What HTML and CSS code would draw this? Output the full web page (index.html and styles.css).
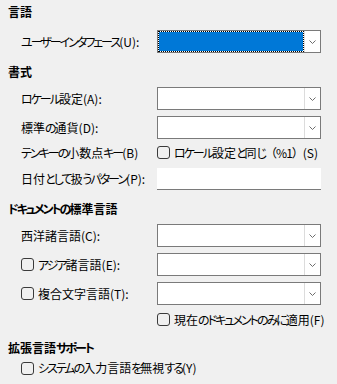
FILE: index.html
```html
<!DOCTYPE html>
<html lang="ja">
<head>
<meta charset="utf-8">
<link rel="stylesheet" href="styles.css">
</head>
<body>
<div class="page">
  <div class="heading mt4">言語</div>
  <div class="row mt10">
    <span class="label"><span class="k">ユーザーインタフェース</span>(U):</span>
    <div class="combo"><div class="field focused"></div><div class="btn"><svg width="7" height="4" viewBox="0 0 7 4"><polyline points="0.5,0.5 3.5,3.5 6.5,0.5" /></svg></div></div>
  </div>

  <div class="heading mt11">書式</div>
  <div class="row mt7">
    <span class="label"><span class="k">ロケール</span>設定(A):</span>
    <div class="combo"><div class="field"></div><div class="btn"><svg width="7" height="4" viewBox="0 0 7 4"><polyline points="0.5,0.5 3.5,3.5 6.5,0.5" /></svg></div></div>
  </div>
  <div class="row mt6">
    <span class="label">標準<span class="k">の</span>通貨(D):</span>
    <div class="combo"><div class="field"></div><div class="btn"><svg width="7" height="4" viewBox="0 0 7 4"><polyline points="0.5,0.5 3.5,3.5 6.5,0.5" /></svg></div></div>
  </div>
  <div class="row mt2">
    <span class="label"><span class="k">テンキーの</span>小数点<span class="k">キー</span>(B)</span>
    <label class="check"><span class="box"></span><span><span class="k">ロケール</span>設定<span class="k">と</span>同<span class="k">じ</span><span class="fw">（%1）</span>(S)</span></label>
  </div>
  <div class="row mt3">
    <span class="label">日付<span class="k">として</span>扱<span class="k">うパターン</span>(P):</span>
    <div class="edit"></div>
  </div>

  <div class="heading mt11"><span class="k">ドキュメントの</span>標準言語</div>
  <div class="row mt7">
    <span class="label">西洋諸言語(C):</span>
    <div class="combo"><div class="field"></div><div class="btn"><svg width="7" height="4" viewBox="0 0 7 4"><polyline points="0.5,0.5 3.5,3.5 6.5,0.5" /></svg></div></div>
  </div>
  <div class="row mt6">
    <label class="label check"><span class="box"></span><span><span class="k">アジア</span>諸言語(E):</span></label>
    <div class="combo"><div class="field"></div><div class="btn"><svg width="7" height="4" viewBox="0 0 7 4"><polyline points="0.5,0.5 3.5,3.5 6.5,0.5" /></svg></div></div>
  </div>
  <div class="row mt6">
    <label class="label check"><span class="box"></span><span>複合文字言語(T):</span></label>
    <div class="combo"><div class="field"></div><div class="btn"><svg width="7" height="4" viewBox="0 0 7 4"><polyline points="0.5,0.5 3.5,3.5 6.5,0.5" /></svg></div></div>
  </div>
  <div class="row mt3">
    <span class="label"></span>
    <label class="check"><span class="box"></span><span>現在<span class="k">のドキュメントのみに</span>適用(F)</span></label>
  </div>

  <div class="heading mt9">拡張言語<span class="k">サポート</span></div>
  <div class="row short mt4">
    <label class="check"><span class="box"></span><span><span class="k">システムの</span>入力言語<span class="k">を</span>無視<span class="k">する</span>(Y)</span></label>
  </div>
</div>
</body>
</html>
```

FILE: styles.css
```css
html, body {
  margin: 0;
  padding: 0;
  background: #f0f0f0;
}
.page {
  width: 337px;
  height: 384px;
  box-sizing: border-box;
  padding: 0 0 0 8px;
  font-family: "Noto Sans CJK JP", "Noto Sans", sans-serif;
  font-size: 12px;
  font-feature-settings: "palt";
  color: #000;
  display: flex;
  flex-direction: column;
}
.k {
  letter-spacing: -2px;
}
.fw {
  font-feature-settings: normal;
  letter-spacing: -1px;
}
.heading {
  font-weight: bold;
  height: 16px;
  line-height: 16px;
}
.row {
  display: flex;
  align-items: center;
  height: 23px;
  padding-left: 13px;
}
.row.short { height: 16px; }
.label {
  width: 136px;
  flex: none;
  white-space: nowrap;
  line-height: 16px;
}
.combo {
  width: 164px;
  height: 23px;
  box-sizing: border-box;
  border: 1px solid #7a7a7a;
  background: #fff;
  display: flex;
}
.field {
  flex: 1;
}
.field.focused {
  border: 1px dotted #000;
  background: linear-gradient(#0078d7, #0078d7) padding-box, #fff border-box;
}
.btn {
  width: 16px;
  flex: none;
  box-sizing: border-box;
  border-left: 1px solid #dcdcdc;
  display: flex;
  align-items: center;
  justify-content: center;
  padding-top: 1px;
}
.btn svg polyline {
  fill: none;
  stroke: #6d6d6d;
  stroke-width: 1;
}
.edit {
  width: 164px;
  height: 22px;
  box-sizing: border-box;
  background: #fff;
  border-bottom: 1px solid #7a7a7a;
}
.check {
  display: flex;
  align-items: center;
  gap: 4px;
  white-space: nowrap;
  line-height: 16px;
}
.box {
  width: 13px;
  height: 13px;
  box-sizing: border-box;
  border: 1px solid #3a3a3a;
  border-radius: 3px;
  flex: none;
}
.mt2 { margin-top: 2px; }
.mt3 { margin-top: 3px; }
.mt4 { margin-top: 4px; }
.mt6 { margin-top: 6px; }
.mt7 { margin-top: 7px; }
.mt9 { margin-top: 9px; }
.mt10 { margin-top: 10px; }
.mt11 { margin-top: 11px; }
```
